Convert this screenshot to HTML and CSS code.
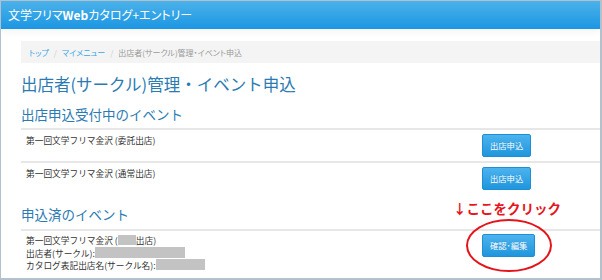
FILE: index.html
```html
<!DOCTYPE html>
<html lang="ja">
<head>
  <meta charset="UTF-8">
  <title>出店者(サークル)管理・イベント申込</title>
  <link rel="stylesheet" href="styles.css">
</head>
<body>
  <div class="frame">
    <div class="navbar"><span class="brand">文学フリマ<b>Web</b>カタログ+エントリー</span></div>

    <div class="container">
      <ul class="breadcrumb">
        <li><a href="#">トップ</a></li>
        <li class="sep">/</li>
        <li><a href="#">マイメニュー</a></li>
        <li class="sep">/</li>
        <li class="active">出店者(サークル)管理・イベント申込</li>
      </ul>

      <h1>出店者(サークル)管理・イベント申込</h1>

      <h2>出店申込受付中のイベント</h2>
      <div class="table">
        <div class="row">
          <div class="cell name">第一回文学フリマ金沢 (委託出店)</div>
          <div class="cell action"><a class="btn" href="#">出店申込</a></div>
        </div>
        <div class="row">
          <div class="cell name">第一回文学フリマ金沢 (通常出店)</div>
          <div class="cell action"><a class="btn" href="#">出店申込</a></div>
        </div>
      </div>

      <h2>申込済のイベント</h2>
      <div class="table done">
        <div class="row">
          <div class="cell name">
            第一回文学フリマ金沢 (<span class="mask m1"></span>出店)<br>
            出店者(サークル):<span class="mask m2"></span><br>
            カタログ表記出店名(サークル名):<span class="mask m3"></span>
          </div>
          <div class="cell action"><a class="btn" href="#">確認･編集</a></div>
        </div>
      </div>
    </div>

    <div class="note">↓ここをクリック</div>
    <div class="circle"></div>
  </div>
</body>
</html>
```

FILE: styles.css
```css
html {
  box-sizing: border-box;
}

*, *:before, *:after {
  box-sizing: inherit;
}

body {
  margin: 0;
  font-family: "Noto Sans CJK JP", "Liberation Sans", sans-serif;
  color: #333;
  background: #fff;
}

.frame {
  position: relative;
  width: 602px;
  height: 280px;
  overflow: hidden;
  border-style: solid;
  border-color: #b3c0cd;
  border-width: 1px 2px 2px 1px;
}

.navbar {
  height: 28px;
  padding-left: 7px;
  background: linear-gradient(#4bb2ea, #1c96e2);
  box-shadow: 0 2px 8px rgba(0,0,0,0.06);
  color: #fff;
  font-size: 12px;
  line-height: 28px;
  font-feature-settings: "palt";
}

.navbar b {
  font-weight: bold;
}

.container {
  padding-left: 20px;
}

.breadcrumb {
  list-style: none;
  margin: 12px 0 0;
  padding: 0 8px;
  height: 22px;
  display: flex;
  align-items: center;
  gap: 5px;
  background: #f4f4f4;
  font-size: 8px;
  color: #999;
  font-feature-settings: "palt";
}

.breadcrumb a {
  color: #3aa6e6;
  text-decoration: none;
}

.breadcrumb .sep {
  color: #ccc;
}

h1, h2 {
  margin: 0;
  font-weight: normal;
  color: #2b7bb2;
}

h1 {
  margin-top: 11px;
  font-size: 16.5px;
  line-height: 20px;
}

h2 {
  margin-top: 12px;
  font-size: 13.5px;
  line-height: 16px;
}

.table {
  margin-top: 6px;
  font-size: 8.7px;
  line-height: 11.5px;
}

.table.done {
  margin-top: 7px;
  border-bottom: 1px solid #e2e2e2;
}

.row {
  display: flex;
  border-top: 2px solid #e7e7e7;
}

.cell.name {
  flex: 0 0 461px;
  padding: 5px 0 0 5px;
}

.cell.action {
  padding: 4px 0;
}

.done .cell.name {
  padding: 4px 0 6px 5px;
}

.done .cell.action {
  padding-top: 3px;
}

.btn {
  display: inline-block;
  height: 23px;
  padding: 0 7px;
  line-height: 21px;
  font-size: 8.3px;
  color: #fff;
  text-decoration: none;
  border: 1px solid #1e8fd5;
  border-radius: 2px;
  background: linear-gradient(#4cb3ee, #2096dd);
  text-shadow: 0 -1px 0 rgba(0,0,0,0.1);
}

.mask {
  display: inline-block;
  height: 10px;
  vertical-align: -1px;
  background: #c3c3c3;
}

.mask.m1 { width: 18px; }
.mask.m2 { width: 90px; height: 11px; }
.mask.m3 { width: 49px; height: 11px; }

.note {
  position: absolute;
  left: 452px;
  top: 199px;
  font-size: 13.5px;
  line-height: 16px;
  font-weight: bold;
  color: #e5161d;
}

.circle {
  position: absolute;
  left: 465px;
  top: 218px;
  width: 86px;
  height: 53px;
  border: 2.5px solid #e3141b;
  border-radius: 50%;
}
```
